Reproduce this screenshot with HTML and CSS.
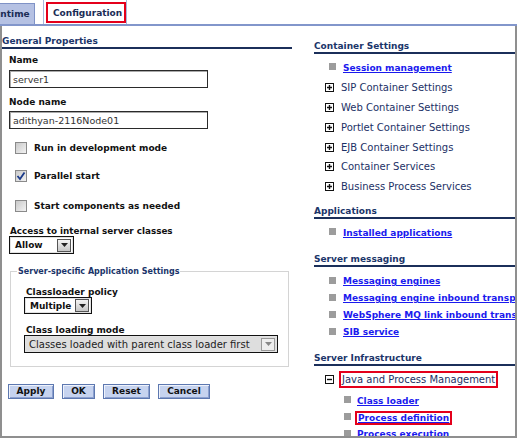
FILE: index.html
```html
<!DOCTYPE html>
<html>
<head>
<meta charset="utf-8">
<link rel="stylesheet" href="styles.css">
</head>
<body>
<div class="page">
  <div class="tabs">
    <div class="tab tab-off">Runtime</div>
    <div class="tab tab-on"><span class="hl">Configuration</span></div>
  </div>
  <div class="frame">
    <div class="left">
      <h2 class="sec">General Properties</h2>
      <div class="form">
        <div class="label">Name</div>
        <div class="input">server1</div>
        <div class="label l2">Node name</div>
        <div class="input">adithyan-2116Node01</div>
        <div class="check c1"><span class="box"></span><span>Run in development mode</span></div>
        <div class="check c2"><span class="box"><svg width="10" height="10" viewBox="0 0 10 10"><path d="M1.5 5 L4 8 L8.5 1.5" fill="none" stroke="#1a3a8a" stroke-width="1.8"/></svg></span><span>Parallel start</span></div>
        <div class="check c3"><span class="box"></span><span>Start components as needed</span></div>
        <div class="label l3">Access to internal server classes</div>
        <div class="select sel-allow"><span class="val">Allow</span><span class="drop"><svg width="7" height="4" viewBox="0 0 7 4"><path d="M0 0 H7 L3.5 4Z" fill="#222"/></svg></span></div>
        <fieldset class="fs">
          <legend>Server-specific Application Settings</legend>
          <div class="label">Classloader policy</div>
          <div class="select sel-multi"><span class="val">Multiple</span><span class="drop"><svg width="7" height="4" viewBox="0 0 7 4"><path d="M0 0 H7 L3.5 4Z" fill="#222"/></svg></span></div>
          <div class="label l4">Class loading mode</div>
          <div class="select sel-mode"><span class="val">Classes loaded with parent class loader first</span><span class="drop dis"><svg width="7" height="4" viewBox="0 0 7 4"><path d="M0 0 H7 L3.5 4Z" fill="#888"/></svg></span></div>
        </fieldset>
        <div class="buttons">
          <span class="btn b-apply">Apply</span>
          <span class="btn b-ok">OK</span>
          <span class="btn b-reset">Reset</span>
          <span class="btn b-cancel">Cancel</span>
        </div>
      </div>
    </div>
    <div class="right">
      <h2 class="sec s1">Container Settings</h2>
      <ul class="tree t1">
        <li class="leaf"><span class="sq"></span><a href="#">Session management</a></li>
        <li class="node"><svg class="pm" width="9" height="9" viewBox="0 0 9 9"><rect x="0.5" y="0.5" width="8" height="8" fill="#fff" stroke="#111"/><path d="M2 4.5 H7 M4.5 2 V7" stroke="#111" stroke-width="1.4"/></svg>SIP Container Settings</li>
        <li class="node"><svg class="pm" width="9" height="9" viewBox="0 0 9 9"><rect x="0.5" y="0.5" width="8" height="8" fill="#fff" stroke="#111"/><path d="M2 4.5 H7 M4.5 2 V7" stroke="#111" stroke-width="1.4"/></svg>Web Container Settings</li>
        <li class="node"><svg class="pm" width="9" height="9" viewBox="0 0 9 9"><rect x="0.5" y="0.5" width="8" height="8" fill="#fff" stroke="#111"/><path d="M2 4.5 H7 M4.5 2 V7" stroke="#111" stroke-width="1.4"/></svg>Portlet Container Settings</li>
        <li class="node"><svg class="pm" width="9" height="9" viewBox="0 0 9 9"><rect x="0.5" y="0.5" width="8" height="8" fill="#fff" stroke="#111"/><path d="M2 4.5 H7 M4.5 2 V7" stroke="#111" stroke-width="1.4"/></svg>EJB Container Settings</li>
        <li class="node"><svg class="pm" width="9" height="9" viewBox="0 0 9 9"><rect x="0.5" y="0.5" width="8" height="8" fill="#fff" stroke="#111"/><path d="M2 4.5 H7 M4.5 2 V7" stroke="#111" stroke-width="1.4"/></svg>Container Services</li>
        <li class="node"><svg class="pm" width="9" height="9" viewBox="0 0 9 9"><rect x="0.5" y="0.5" width="8" height="8" fill="#fff" stroke="#111"/><path d="M2 4.5 H7 M4.5 2 V7" stroke="#111" stroke-width="1.4"/></svg>Business Process Services</li>
      </ul>
      <h2 class="sec s2">Applications</h2>
      <ul class="tree t2">
        <li class="leaf"><span class="sq"></span><a href="#">Installed applications</a></li>
      </ul>
      <h2 class="sec s3">Server messaging</h2>
      <ul class="tree t3">
        <li class="leaf"><span class="sq"></span><a href="#">Messaging engines</a></li>
        <li class="leaf"><span class="sq"></span><a href="#">Messaging engine inbound transports</a></li>
        <li class="leaf"><span class="sq"></span><a href="#">WebSphere MQ link inbound transports</a></li>
        <li class="leaf"><span class="sq"></span><a href="#">SIB service</a></li>
      </ul>
      <h2 class="sec s4">Server Infrastructure</h2>
      <ul class="tree t4">
        <li class="node open"><svg class="pm" width="9" height="9" viewBox="0 0 9 9"><rect x="0.5" y="0.5" width="8" height="8" fill="#fff" stroke="#111"/><path d="M2 4.5 H7" stroke="#111" stroke-width="1.4"/></svg><span class="hl hl-java">Java and Process Management</span></li>
        <li class="leaf sub first"><span class="sq"></span><a href="#">Class loader</a></li>
        <li class="leaf sub"><span class="sq"></span><a href="#" class="hl hl-pd">Process definition</a></li>
        <li class="leaf sub"><span class="sq"></span><a href="#">Process execution</a></li>
      </ul>
    </div>
  </div>
</div>
</body>
</html>
```

FILE: styles.css
```css
* { box-sizing: border-box; }
html, body { margin: 0; padding: 0; background: #fff; }
body {
  font-family: "DejaVu Sans", Verdana, sans-serif;
  font-size: 10px;
  color: #1d1d1d;
  width: 517px;
  height: 439px;
  overflow: hidden;
}
.page { width: 517px; height: 439px; }

.tabs {
  display: flex;
  align-items: flex-end;
  height: 26px;
  border-bottom: 2px solid #8296cb;
  overflow: hidden;
  padding-top: 1px;
}
.tab {
  font-weight: bold;
  font-size: 9px;
  color: #1a2c55;
  border: 1px solid #7f92c6;
  border-bottom: none;
  flex-shrink: 0;
  white-space: nowrap;
}
.tab-off {
  margin-left: -23px;
  height: 21px;
  width: 58px;
  padding: 5px 0 0 9px;
  background: #b5c1e3;
}
.tab-on {
  margin-left: 8px;
  height: 25px;
  width: 84px;
  padding: 2px 0 0 2px;
  background: #fff;
  border-color: #a9b8de;
}
.hl { border: 2px solid #e4001b; }
.tab-on .hl {
  display: block;
  width: 80px;
  height: 21px;
  padding: 4px 0 0 5px;
}

.frame {
  display: grid;
  grid-template-columns: 292px 221px;
  height: 412px;
  border-left: 2px solid #8f8f8f;
  border-bottom: 2px solid #8f8f8f;
  border-right: 2px solid #8f8f8f;
  width: 517px;
}
.right { padding-left: 20px; overflow: hidden; }

.sec {
  margin: 0;
  font-size: 9px;
  font-weight: bold;
  color: #1b356a;
  line-height: 12px;
  border-bottom: 2px solid #1b2f5a;
}
.left .sec { padding: 9px 0 0 0; width: 290px; }
.right .s1 { padding-top: 14px; }
.right .s2 { margin-top: 8px; }
.right .s3 { margin-top: 10px; }
.right .s4 { margin-top: 11px; }

.form { padding-left: 7px; }
.label {
  font-weight: bold;
  font-size: 9px;
  color: #111;
  line-height: 12px;
  margin-top: 5px;
  margin-bottom: 4px;
  white-space: nowrap;
}
.l2 { margin-top: 8px; margin-bottom: 3px; }
.input {
  width: 199px;
  height: 18px;
  border: 1px solid #2a2a2a;
  box-shadow: inset 1px 1px 0 #aaa;
  padding: 2px 0 0 3px;
  font-size: 9.5px;
  color: #333;
  line-height: 13px;
}
.check {
  display: flex;
  align-items: center;
  font-weight: bold;
  font-size: 9px;
  color: #111;
  height: 14px;
  padding-left: 6px;
}
.c1 { margin-top: 12px; }
.c2 { margin-top: 14px; }
.c3 { margin-top: 16px; }
.box {
  width: 12px;
  height: 12px;
  border: 1px solid #8a8a8a;
  background: linear-gradient(135deg, #c9c9c9, #f2f2f2);
  margin-right: 7px;
  display: flex;
  align-items: center;
  justify-content: center;
  flex-shrink: 0;
}
.l3 { margin-top: 12px; margin-bottom: 0; font-size: 8.8px; margin-left: 1px; }
.select {
  display: flex;
  align-items: center;
  height: 18px;
  border: 1px solid #111;
  box-shadow: inset 0 0 0 1px #e2e2e2;
  font-weight: bold;
  font-size: 9px;
  color: #111;
  padding-left: 5px;
  padding-right: 2px;
}
.select .val { flex: 1; white-space: nowrap; }
.drop {
  width: 14px;
  height: 13px;
  border: 1px solid #555;
  background: linear-gradient(#f4f4f4, #c6c6c6);
  display: flex;
  align-items: center;
  justify-content: center;
  flex-shrink: 0;
}
.drop.dis { border-color: #999; background: #eee; }
.sel-allow { width: 65px; margin-top: -1px; }
.sel-multi { width: 68px; height: 17px; }
.sel-mode {
  width: 254px;
  background: #dedede;
  font-weight: normal;
  font-size: 10px;
  color: #222;
  padding-left: 4px;
}
.fs {
  margin: 13px 0 0 1px;
  width: 279px;
  border: 1px solid #d4d4d4;
  padding: 11px 0 13px 13px;
}
.fs legend {
  font-weight: bold;
  font-size: 8px;
  color: #1b356a;
  padding: 0 1px;
  margin-left: -7px;
}
.fs .label { margin-top: 0; margin-bottom: 0; line-height: 10px; margin-left: 2px; }
.fs .l4 { margin-top: 11px; margin-bottom: 0; }

.buttons {
  display: flex;
  gap: 8px;
  margin-top: 17px;
  margin-left: -1px;
}
.btn {
  display: inline-block;
  height: 15px;
  line-height: 13px;
  text-align: center;
  font-weight: bold;
  font-size: 9px;
  color: #111;
  background: #c6d3ef;
  border: 1px solid #5d78b0;
  box-shadow: inset 1px 1px 0 #eef2fb, inset -1px -1px 0 #8ca0cf;
}
.b-apply { width: 46px; }
.b-ok { width: 33px; }
.b-reset { width: 47px; }
.b-cancel { width: 52px; }

.tree { list-style: none; margin: 0; padding: 0; }
.tree li {
  display: flex;
  align-items: center;
  height: 19.8px;
  white-space: nowrap;
  color: #1c3166;
  font-size: 10px;
}
.tree a { color: #1a1aee; font-weight: bold; font-size: 9px; text-decoration: underline; }
.t1 { margin-top: 4px; }
.t2 { margin-top: 4px; }
.t2 li { height: 20px; }
.t3 { margin-top: 6px; }
.t3 li { height: 17px; }
.t4 { margin-top: 4px; }
.t4 li.sub { height: 16.7px; }
.t4 li.first { margin-top: 3px; }
.t4 li.open { height: 20px; }
.sq {
  width: 7px;
  height: 7px;
  background: #9c9c9c;
  margin-left: 15px;
  margin-right: 7px;
  margin-top: -2px;
  flex-shrink: 0;
}
.sub .sq { margin-left: 30px; margin-right: 6px; }
.pm {
  flex-shrink: 0;
  margin-left: 11px;
  margin-right: 7px;
}
.hl-java {
  margin-left: -2px;
  padding: 1px 1px 1px 1px;
  color: #1c3166;
}
.hl-pd { padding: 0 1px; margin-left: -2px; line-height: 10px; }
```
